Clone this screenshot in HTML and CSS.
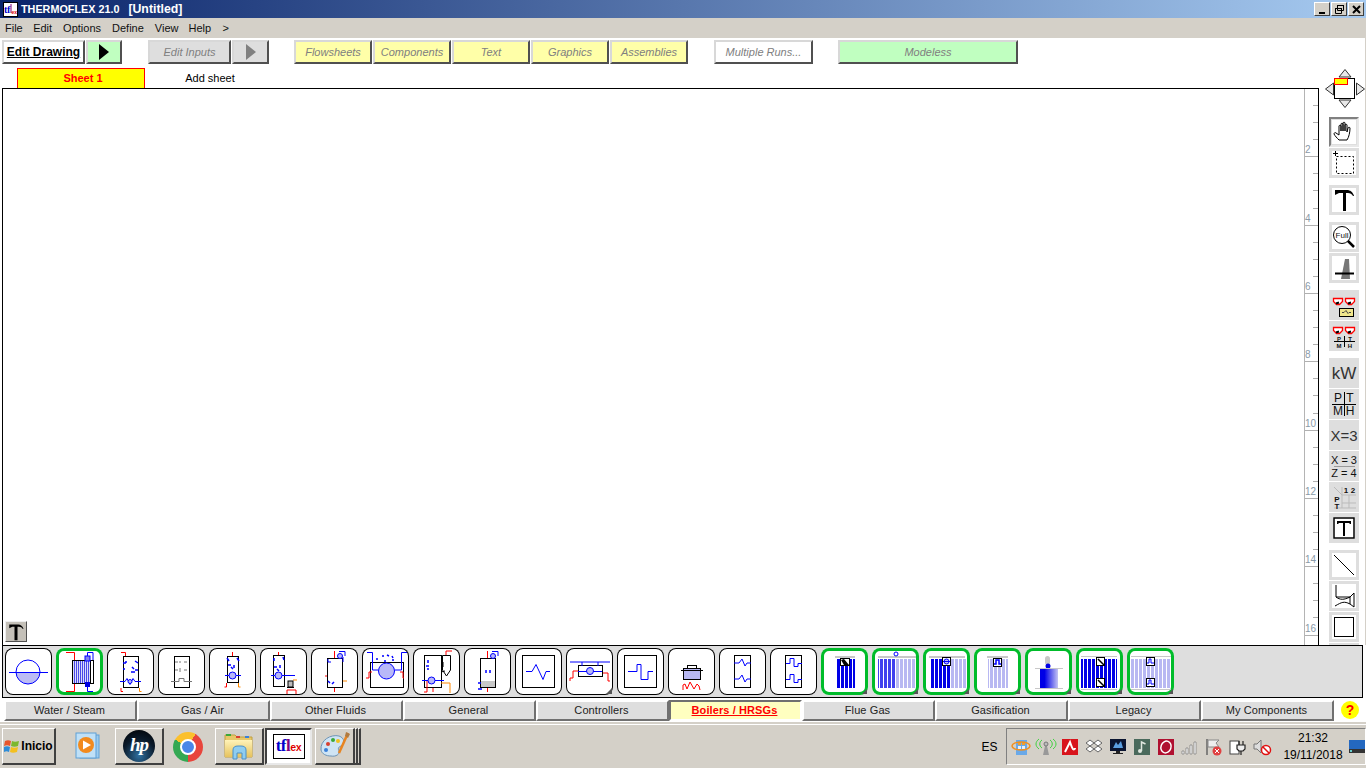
FILE: index.html
```html
<!DOCTYPE html>
<html lang="en">
<head>
<meta charset="utf-8">
<title>THERMOFLEX 21.0</title>
<link rel="stylesheet" href="styles.css">
</head>
<body>
<svg class="defs" width="0" height="0" aria-hidden="true">
  <defs>
    <pattern id="sd" width="4" height="4" patternUnits="userSpaceOnUse"><rect width="3" height="4" fill="#0000e6"/></pattern>
    <pattern id="sm" width="4" height="4" patternUnits="userSpaceOnUse"><rect width="3" height="4" fill="#4040ee"/></pattern>
    <pattern id="sl" width="4" height="4" patternUnits="userSpaceOnUse"><rect width="3" height="4" fill="#b8b8f2"/></pattern>
    <pattern id="sf" width="2" height="2" patternUnits="userSpaceOnUse"><rect width="2" height="2" fill="#dcdcfa"/><rect width="1" height="2" fill="#4a4ae8"/></pattern>
    <linearGradient id="gb" x1="0" x2="1" y1="0" y2="0"><stop offset="0.25" stop-color="#0000e6"/><stop offset="1" stop-color="#c4c4f4"/></linearGradient>
    <linearGradient id="fo" x1="0" x2="0" y1="0" y2="1"><stop offset="0" stop-color="#fff3b8"/><stop offset="1" stop-color="#e6c25e"/></linearGradient>
  </defs>
</svg>
<div class="app">
  <header class="titlebar">
    <div class="applogo"><svg width="13" height="13" viewBox="0 0 13 13"><text x="0" y="10" class="lgb">t</text><text x="3" y="10" class="lgb">f</text><path d="M7 1v9" stroke="#800080"/><text x="7.500" y="11" class="lgr">ex</text></svg></div>
    <div class="title"><span>THERMOFLEX 21.0</span><span class="doc">[Untitled]</span></div>
    <div class="winbtns">
      <div class="winbtn"><svg width="15" height="13"><rect x="4" y="9" width="6" height="2" fill="#000"/></svg></div>
      <div class="winbtn"><svg width="15" height="13"><path d="M5.500 2.500h6v5h-6zM3.500 5.500h6v5h-6z" fill="#d4d0c8" stroke="#000"/><path d="M5 2.500h7M3 5.500h7" stroke="#000" stroke-width="1"/></svg></div>
      <div class="winbtn"><svg width="15" height="13"><path d="M4 3l7 7M11 3l-7 7" stroke="#000" stroke-width="2"/></svg></div>
    </div>
  </header>
  <nav class="menubar">
    <span class="menu m1">File</span><span class="menu m2">Edit</span><span class="menu m3">Options</span><span class="menu m4">Define</span><span class="menu m5">View</span><span class="menu m6">Help</span><span class="menu m7">&gt;</span>
  </nav>
  <div class="mid">
    <div class="leftcol">
      <div class="toolbar">
        <div class="tb edit">Edit Drawing</div>
        <div class="tb play"><svg width="12" height="18"><path d="M1 1l10 8-10 8z" fill="#000"/></svg></div>
        <div class="tb inputs dis">Edit Inputs</div>
        <div class="tb play2"><svg width="12" height="18"><path d="M1 1l10 8-10 8z" fill="#808080"/></svg></div>
        <div class="tb yel dis">Flowsheets</div>
        <div class="tb yel dis">Components</div>
        <div class="tb yel dis">Text</div>
        <div class="tb yel dis">Graphics</div>
        <div class="tb yel lastyel dis">Assemblies</div>
        <div class="tb multi dis">Multiple Runs...</div>
        <div class="tb modeless dis">Modeless</div>
      </div>
      <div class="sheets">
        <div class="sheet">Sheet 1</div>
        <div class="addsheet">Add sheet</div>
      </div>
      <main class="canvas">
        <div class="drawing">
          <div class="tbtn"><svg width="18" height="18" viewBox="0 0 24 24"><path d="M3 2h12c3 0 6 2 7 6h-1c-1-2-3-3-5-3h-2v18h-4V5H7L3 7z" fill="#000"/></svg></div>
        </div>
        <div class="ruler">
          <div class="rl">2</div><div class="rl">4</div><div class="rl">6</div><div class="rl">8</div><div class="rl">10</div><div class="rl">12</div><div class="rl">14</div><div class="rl">16</div>
        </div>
      </main>
    </div>
    <aside class="panel">
      <svg class="navw" width="40" height="40" viewBox="0 0 40 40">
        <path d="M20 1.500l6 7.500H14zM20 39.500l-6-7.500h12zM.5 21l8-6v12zM39.500 21l-8-6v12z" fill="#e8e8e8" stroke="#333"/>
        <rect x="9.500" y="10.500" width="20" height="20" fill="#fff" stroke="#000"/>
        <rect x="9.500" y="10.500" width="13" height="6" fill="#ffff00" stroke="#ff0000"/>
      </svg>
      <div class="pb inner pressed"><svg width="24" height="24" viewBox="0 0 24 24"><path d="M7 20c-2-2-4-4-5-6 0-1 1-2 2-1l3 2V6c0-1 2-1 2 0v5-7c0-1 2-1 2 0v7-8c0-1 2-1 2 0v8-6c0-1 2-1 2 0v7l1-4c0-1 2-1 2 0 0 4-1 9-3 12z" fill="#fff" stroke="#000"/></svg></div>
      <div class="pb inner"><svg width="24" height="24" viewBox="0 0 24 24"><rect x="4.500" y="5.500" width="17" height="17" fill="none" stroke="#000" stroke-dasharray="2 2"/><path d="M1 2.500h5M3.500 0v5" stroke="#000"/></svg></div>
      <div class="pb inner gap"><svg width="24" height="24" viewBox="0 0 24 24"><path d="M3 2h12c3 0 6 2 7 6h-1c-1-2-3-3-5-3h-2v18h-3V5H7L3 7z" fill="#000"/></svg></div>
      <div class="pb inner gap"><svg width="24" height="24" viewBox="0 0 24 24"><circle cx="10" cy="10" r="8.500" fill="#fff" stroke="#000"/><text x="10" y="13" class="svt full">Full</text><path d="M16 16l6 6" stroke="#000" stroke-width="2.500"/></svg></div>
      <div class="pb inner"><svg width="24" height="24" viewBox="0 0 24 24"><path d="M13 3h4l1 20H9z" fill="#777"/><path d="M3 17.500h19" stroke="#000" stroke-width="2"/></svg></div>
      <div class="pb gap"><svg width="26" height="26" viewBox="0 0 26 26"><path d="M2.500 6.500h9v3l-3 3h-3l-3-3zM14.500 6.500h9v3l-3 3h-3l-3-3z" fill="#fff" stroke="#f00" stroke-width="1.300"/><path d="M5 11.500l3-1M17 11.500l3-1" stroke="#000" stroke-width="2"/><rect x="8.500" y="16.500" width="14" height="8" fill="#f0e68c" stroke="#000"/><path d="M11 20.500h2l2-2 2 3 1-1h2" fill="none" stroke="#444"/></svg></div>
      <div class="pb"><svg width="26" height="26" viewBox="0 0 26 26"><path d="M2.500 4.500h9v3l-3 3h-3l-3-3zM14.500 4.500h9v3l-3 3h-3l-3-3z" fill="#fff" stroke="#f00" stroke-width="1.300"/><path d="M5 9.500l3-1M17 9.500l3-1" stroke="#000" stroke-width="2"/><path d="M13.500 13v11M3 18.500h21" stroke="#000"/><text x="8" y="17.500" class="svt tiny">P</text><text x="19" y="17.500" class="svt tiny">T</text><text x="8" y="24.500" class="svt tiny">M</text><text x="19" y="24.500" class="svt tiny">H</text></svg></div>
      <div class="pb gap"><svg width="30" height="20" viewBox="0 0 30 20"><text x="15" y="16" class="svt big">kW</text></svg></div>
      <div class="pb"><svg width="26" height="26" viewBox="0 0 26 26"><path d="M13.500 1v24M1 13.500h24" stroke="#000"/><text x="7" y="11" class="svt mid14">P</text><text x="19" y="11" class="svt mid14">T</text><text x="7" y="24" class="svt mid14">M</text><text x="19" y="24" class="svt mid14">H</text></svg></div>
      <div class="pb"><svg width="30" height="20" viewBox="0 0 30 20"><text x="15" y="16" class="svt eq">X=3</text></svg></div>
      <div class="pb"><svg width="26" height="26" viewBox="0 0 26 26"><text x="13" y="11" class="svt x2">X = 3</text><path d="M3 13.500h21" stroke="#999"/><text x="13" y="24" class="svt x2">Z = 4</text></svg></div>
      <div class="pb"><svg width="28" height="28" viewBox="0 0 28 28"><path d="M4 4l8 8M12 12h14M12 20h14M4 25h22M12 4v21M19 12v13" stroke="#bbb" fill="none"/><text x="16" y="10" class="svt bold10">1</text><text x="23" y="10" class="svt bold10">2</text><text x="7" y="19" class="svt bold10">P</text><text x="7" y="26" class="svt bold10">T</text></svg></div>
      <div class="pb inner"><svg width="22" height="22" viewBox="0 0 22 22"><rect x="1" y="1" width="20" height="20" fill="#fff" stroke="#000" stroke-width="1.500"/><path d="M4 4h14v3h-1l-1-1h-4v13h-2V6H6L5 7H4z" fill="#000"/></svg></div>
      <div class="pb inner gap"><svg width="24" height="24" viewBox="0 0 24 24"><path d="M2 2l20 20" stroke="#000"/></svg></div>
      <div class="pb inner"><svg width="24" height="24" viewBox="0 0 24 24"><path d="M4 1v12c4 3 8 3 14 0l4-4v14l-4-3c-6-3-8-2-15 2" fill="none" stroke="#000"/><path d="M4 13h14v7" fill="none" stroke="#000"/></svg></div>
      <div class="pb inner"><svg width="24" height="24" viewBox="0 0 24 24"><rect x="2.500" y="2.500" width="19" height="19" fill="#fff" stroke="#000"/></svg></div>
      <div class="pb"></div>
    </aside>
  </div>
  <section class="tray">
    <div class="ico"><svg viewBox="0 0 47 47"><path class="fl" d="M11 24a12 12 0 0 0 24 0z"/><circle class="b" cx="23" cy="24" r="12"/><path class="b" d="M4 24.500h39"/></svg></div>
    <div class="ico g"><svg viewBox="0 0 47 47"><rect x="16.500" y="12.500" width="18" height="23" fill="url(#sf)" stroke="#000"/><rect x="34.500" y="12.500" width="3" height="23" fill="#fff" stroke="#000"/><rect x="29" y="8" width="5" height="5" fill="#8080f0" stroke="#00f"/><rect x="29" y="34" width="5" height="5" fill="#0000e0"/><path class="r" d="M10 4.500h8.500V12M10 43.500h8.500V36"/><path class="b" d="M31.500 8V4.500H37V12M31.500 38v5.500H37"/></svg></div>
    <div class="ico"><svg viewBox="0 0 47 47"><rect class="k" x="16.500" y="8.500" width="15" height="31"/><path class="r" d="M14 4.500h4.500V8M14 40v3.500h2"/><path class="o" d="M32.500 40v3.500h2"/><path class="b d" d="M16 15h3M19 13v2M28 13l3 2M16 21h2M28 22h3M25 19l2 2M24 24h4"/><path class="b" d="M13 33.500h5l2-3 3 6 3-6 2 3h6"/><circle class="c" cx="23" cy="33.500" r="2"/></svg></div>
    <div class="ico"><svg viewBox="0 0 47 47"><rect class="k" x="16.500" y="8.500" width="15" height="31"/><path class="gy" d="M17 14h3M22 13v2M26 14h3M17 22h3M22 20v4M26 22h3M13 33.500h8v-3h5v3h8"/></svg></div>
    <div class="ico"><svg viewBox="0 0 47 47"><rect class="k" x="18.500" y="8.500" width="11" height="26"/><path class="r" d="M23.500 4v4M17.500 35v4h-2"/><path class="o" d="M29.500 35v4h2"/><path class="b d" d="M18 10l2 3M28 10l2 3M19 17h3M25 17v3M22 19l2 2"/><path class="b" d="M16 27.500h16"/><circle class="c" cx="23.500" cy="27.500" r="3.500"/></svg></div>
    <div class="ico"><svg viewBox="0 0 47 47"><rect class="k" x="13.500" y="7.500" width="11" height="31"/><path class="r" d="M18.500 4v3M27 46v-4h9v4"/><path class="o" d="M33 32h4"/><path class="b d" d="M14 10v3M23 9l1 3M14 19h3M20 17v3M17 21l2 2"/><path class="b" d="M11 27.500h24"/><circle class="c" cx="18.500" cy="27.500" r="3.500"/><rect x="28" y="33" width="5" height="6" fill="#bbb" stroke="#000"/><path d="M27 39.500h7" stroke="#000"/></svg></div>
    <div class="ico"><svg viewBox="0 0 47 47"><rect class="k" x="16.500" y="10.500" width="15" height="29"/><circle class="c" cx="29" cy="8" r="2.500"/><path class="r" d="M23.500 3v7M23.500 40v4M14 28h2"/><path class="b" d="M28 3.500h6V8M32 9v5M17 11v3h3"/><path class="o" d="M32 33h4"/><path class="b d" d="M17 33l2 2M23 34l-2 2"/></svg></div>
    <div class="ico"><svg viewBox="0 0 47 47"><rect class="k" x="8.500" y="14.500" width="33" height="25"/><circle class="c" cx="24.500" cy="23" r="8"/><path class="b" d="M5 4.500h5.500V22H16M45 4.500h-5.500V22H33"/><path class="b d" d="M20 8h2M25 7l2 1M30 8l1 2M14 11h2M22 13h2M30 12h2"/><path class="r" d="M4 30h3v-6h3M42 30h-1v-6h-3"/></svg></div>
    <div class="ico"><svg viewBox="0 0 47 47"><rect class="k" x="11.500" y="7.500" width="17" height="32"/><path class="k" d="M29.500 7.500h8V22l-4 6-4-6z"/><path class="r" d="M33 7V3h6M14 33v11h-3M20 40v4"/><path class="o" d="M28 35h9v10"/><path class="b" d="M9 32.500h22"/><circle class="c" cx="18.500" cy="32.500" r="3.500"/><path class="b d" d="M15 12v3M16 18h-3M14 21h2"/><path class="gk" d="M28 14h2v5M28 24l4-1"/></svg></div>
    <div class="ico"><svg viewBox="0 0 47 47"><rect class="k" x="16.500" y="10.500" width="15" height="29"/><rect x="17" y="33" width="14" height="6" fill="#c8c8c8"/><circle class="c" cx="29" cy="8" r="2.500"/><path class="r" d="M23.500 3v7M23.500 40v4"/><path class="b" d="M28 3.500h6V8"/><path class="b d" d="M22 22v3M26 22v3M14 35h3M14 41h4"/></svg></div>
    <div class="ico"><svg viewBox="0 0 47 47"><rect class="k" x="7.500" y="7.500" width="32" height="32"/><path class="b" d="M11 23.500h6l4-7 7 15 3-8h4"/></svg></div>
    <div class="ico"><svg viewBox="0 0 47 47"><rect class="k" x="12.500" y="17.500" width="24" height="11"/><path class="b" d="M4 14h40M16 14v4M32 14v4M12 23.500h24"/><circle class="c" cx="24" cy="23" r="3.500"/><path class="r" d="M4 33v-3h3v-7h5M44 33h-2v-8h-5"/><path class="cn" d="M40 46l6-6v6z"/></svg></div>
    <div class="ico"><svg viewBox="0 0 47 47"><rect class="k" x="7.500" y="7.500" width="32" height="32"/><path class="b" d="M11 23.500h9v-7h4v15h7v-8h5"/></svg></div>
    <div class="ico"><svg viewBox="0 0 47 47"><rect x="15.500" y="20.500" width="17" height="11" fill="#b8b8f2" stroke="#000"/><rect x="19.500" y="17.500" width="9" height="3" fill="#fff" stroke="#000"/><path d="M13 22.500h22" stroke="#000"/><path class="r" d="M15 42v-5l2-1 2 5 3-7 4 7 3-5 2 2 1 4"/></svg></div>
    <div class="ico"><svg viewBox="0 0 47 47"><rect class="k" x="15.500" y="7.500" width="16" height="32"/><path class="b" d="M15 15h5l3-4 3 7 2-3h4M15 31h5l3-4 3 7 2-3h4"/></svg></div>
    <div class="ico"><svg viewBox="0 0 47 47"><rect class="k" x="15.500" y="7.500" width="16" height="32"/><path class="b" d="M16 15.500h4v-5h4v8h4v-3h4M16 31.500h4v-5h4v8h4v-3h4"/></svg></div>
    <div class="ico g"><svg viewBox="0 0 47 47"><rect x="14" y="8" width="20" height="2" fill="#c8c8c8"/><rect x="15" y="11" width="19" height="29" fill="url(#sd)"/><rect x="19.500" y="10.500" width="9" height="7" fill="#fff" stroke="#000"/><path d="M20 12l3-1 5 6h-5z" fill="#000"/><path class="cn" d="M41 46l5-5v5z"/></svg></div>
    <div class="ico g"><svg viewBox="0 0 47 47"><rect x="6" y="8" width="38" height="2" fill="#c8c8c8"/><rect x="6" y="11" width="18" height="29" fill="url(#sm)"/><rect x="24" y="11" width="20" height="29" fill="url(#sl)"/><circle cx="24" cy="6" r="2" fill="#fff" stroke="#00f"/><path class="cn" d="M41 46l5-5v5z"/></svg></div>
    <div class="ico g"><svg viewBox="0 0 47 47"><rect x="6" y="8" width="36" height="2" fill="#c8c8c8"/><rect x="7" y="11" width="20" height="29" fill="url(#sd)"/><rect x="27" y="11" width="16" height="29" fill="url(#sl)"/><rect x="19.500" y="9.500" width="8" height="8" fill="#fff" stroke="#000"/><circle class="c" cx="23.500" cy="13.500" r="2.500"/><path class="b" d="M20 13.500h7"/><path class="cn" d="M41 46l5-5v5z"/></svg></div>
    <div class="ico g"><svg viewBox="0 0 47 47"><rect x="13" y="8" width="21" height="2" fill="#c8c8c8"/><rect x="14" y="11" width="20" height="29" fill="url(#sl)"/><rect x="19.500" y="10.500" width="8" height="8" fill="#fff" stroke="#000"/><path d="M20 16h2v-4h3v4h2" fill="none" stroke="#00f" stroke-width="1.500"/><path class="cn" d="M41 46l5-5v5z"/></svg></div>
    <div class="ico g"><svg viewBox="0 0 47 47"><rect x="20" y="8" width="5" height="9" rx="2.500" fill="#c8c8c8"/><circle cx="23" cy="18" r="2.500" fill="#0000e6"/><path d="M10 20.500h28M10 40.500h28" stroke="#c8c8c8"/><rect x="15" y="21" width="18" height="19" fill="url(#gb)"/><path class="cn" d="M41 46l5-5v5z"/></svg></div>
    <div class="ico g"><svg viewBox="0 0 47 47"><rect x="5" y="11" width="36" height="29" fill="url(#sd)"/><path d="M5 8.500h36M5 41.500h36" stroke="#c8c8c8"/><rect x="20.500" y="9.500" width="8" height="8" fill="#fff" stroke="#000"/><path d="M22 11l6 6" stroke="#000" stroke-width="1.500"/><rect x="20.500" y="30.500" width="8" height="8" fill="#fff" stroke="#000"/><path d="M22 32l6 6" stroke="#000" stroke-width="1.500"/><path class="cn" d="M41 46l5-5v5z"/></svg></div>
    <div class="ico g"><svg viewBox="0 0 47 47"><rect x="4" y="11" width="40" height="29" fill="url(#sl)"/><path d="M4 8.500h40M4 41.500h40" stroke="#c8c8c8"/><rect x="19.500" y="9.500" width="8" height="8" fill="#fff" stroke="#000"/><path d="M20 15h2v-4h2v4h3" fill="none" stroke="#00f"/><rect x="19.500" y="30.500" width="8" height="8" fill="#fff" stroke="#000"/><path d="M20 36h2v-4h2v4h3" fill="none" stroke="#00f"/><path class="cn" d="M41 46l5-5v5z"/></svg></div>
  </section>
  <div class="tabs">
    <div class="tab">Water / Steam</div>
    <div class="tab">Gas / Air</div>
    <div class="tab">Other Fluids</div>
    <div class="tab">General</div>
    <div class="tab">Controllers</div>
    <div class="tab active">Boilers / HRSGs</div>
    <div class="tab">Flue Gas</div>
    <div class="tab">Gasification</div>
    <div class="tab">Legacy</div>
    <div class="tab">My Components</div>
    <div class="help">?</div>
  </div>
  <footer class="taskbar">
    <div class="tk start">
      <svg width="16" height="16" viewBox="0 0 16 16"><path d="M1 3c2-1 4-1 6 0l-1 5c-2-1-4-1-6 0z" fill="#e8552c"/><path d="M8 3c2 1 4 1 7 0l-1 5c-2 1-5 1-7 0z" fill="#7cb82f"/><path d="M0 9c2-1 4-1 6 0l-1 5c-2-1-3-1-5 0z" fill="#2e8cd8"/><path d="M7 9c2 1 5 1 7 0l-1 5c-3 1-5 1-7 0z" fill="#f4c01e"/></svg>
      <span>Inicio</span>
    </div>
    <div class="tk flat media"><svg width="30" height="30" viewBox="0 0 30 30"><rect x="5" y="3" width="19" height="23" fill="#9ccbee" stroke="#5fa0d6"/><rect x="1" y="1" width="20" height="25" fill="#bfe0f7" stroke="#5fa0d6"/><circle cx="11" cy="13" r="8" fill="#f28a1e"/><path d="M8 8.500l8 4.500-8 4.500z" fill="#fff"/></svg></div>
    <div class="tk hp"><div class="hpc">hp</div></div>
    <div class="tk flat chrome"><div class="chr"><div class="chi"></div></div></div>
    <div class="tk folder"><svg width="32" height="32" viewBox="0 0 32 32"><path d="M2 5h10l2 2h15v20H2z" fill="#e7c768" stroke="#c0a040"/><rect x="3" y="4" width="5" height="2" fill="#3aa83a"/><rect x="13" y="6" width="4" height="2" fill="#d84030"/><rect x="22" y="6" width="4" height="2" fill="#3a80d8"/><path d="M2 10h27v17H2z" fill="url(#fo)"/><path d="M10 29V20c0-3 2-4 5-4h3c3 0 5 1 5 4v9h-4v-6h-5v6z" fill="#8fcdf0" stroke="#4a90c8"/></svg></div>
    <div class="tk pressedt"><div class="flex"><span class="lb">tf</span><span class="lp">l</span><span class="lr">ex</span></div></div>
    <div class="tk paint"><svg width="32" height="32" viewBox="0 0 32 32"><path d="M2 20C1 10 12 4 20 6c6 2 6 8 2 10-3 1-3 3-2 5 1 3-3 6-8 5-5 0-9-2-10-6z" fill="#cfe4f4" stroke="#6e93b4"/><circle cx="9" cy="14" r="2" fill="#d84030"/><circle cx="14" cy="10" r="2" fill="#3aa83a"/><circle cx="7" cy="20" r="2" fill="#3a80d8"/><circle cx="19" cy="11" r="2" fill="#f0c020"/><path d="M29 3l-9 20" stroke="#e88420" stroke-width="2.500"/><path d="M27 2l4 2-2 4-3-2z" fill="#b07a40"/></svg></div>
    <div class="tk stub"></div><div class="tk stub"></div>
    <div class="lang">ES</div>
    <div class="systray">
      <svg class="ti" width="24" height="18" viewBox="0 0 24 18"><rect x="6" y="2" width="11" height="15" fill="#6aa9e8"/><path d="M8 4h3v3H8zM12 4h3v3h-3z" fill="#f0a030"/><path d="M8 8h3v3H8zM12 8h3v3h-3z" fill="#e8f0f8"/><ellipse cx="11" cy="8" rx="9" ry="4" fill="none" stroke="#f09020" stroke-width="1.500"/></svg>
      <svg class="ti" width="24" height="18" viewBox="0 0 24 18"><path d="M9 17h6l-2-9h-2z" fill="#999"/><circle cx="12" cy="6" r="2" fill="#bbb" stroke="#777"/><path d="M8 2c-3 2-3 6 0 8M16 2c3 2 3 6 0 8M5 1c-4 3-4 7 0 10M19 1c4 3 4 7 0 10" fill="none" stroke="#3fd03f"/></svg>
      <svg class="ti" width="24" height="18" viewBox="0 0 24 18"><rect x="4" y="1" width="16" height="16" fill="#d8141c"/><path d="M7 14l5-10c1 3 2 6 3 7 1 1 2 0 2-1" fill="none" stroke="#fff" stroke-width="2"/></svg>
      <svg class="ti" width="24" height="18" viewBox="0 0 24 18"><path d="M8 2l4 3-4 3-4-3zM16 2l4 3-4 3-4-3zM8 8l4 3-4 3-4-3zM16 8l4 3-4 3-4-3z" fill="#fff" stroke="#666"/></svg>
      <svg class="ti" width="24" height="18" viewBox="0 0 24 18"><rect x="4" y="1" width="16" height="12" fill="#0a1430"/><path d="M7 10l3-6 2 3 3-4 2 7z" fill="#5a9ee0"/><rect x="10" y="13" width="4" height="2" fill="#222"/><rect x="7" y="15" width="10" height="1" fill="#222"/></svg>
      <svg class="ti" width="24" height="18" viewBox="0 0 24 18"><rect x="4" y="1" width="16" height="16" fill="#4a6a5c"/><circle cx="10" cy="13" r="2" fill="#e0e8e0"/><path d="M11.500 13V4l4 2" fill="none" stroke="#e0e8e0" stroke-width="1.500"/></svg>
      <svg class="ti" width="24" height="18" viewBox="0 0 24 18"><rect x="4" y="1" width="16" height="16" fill="#b01030"/><ellipse cx="12" cy="9" rx="5" ry="6" fill="none" stroke="#fff" stroke-width="1.500" transform="rotate(20 12 9)"/></svg>
      <svg class="ti" width="24" height="18" viewBox="0 0 24 18"><path d="M4 13h2v3H4zM8 10h2v6H8zM12 7h2v9h-2zM16 4h2v12h-2z" fill="#fff" stroke="#777" stroke-width="0.700"/></svg>
      <svg class="ti" width="24" height="18" viewBox="0 0 24 18"><path d="M5 1v16" stroke="#666" stroke-width="1.500"/><path d="M6 2h11l-3 3 3 4H6z" fill="#eee" stroke="#888"/><circle cx="15" cy="13" r="4.500" fill="#e04040"/><path d="M13 11l4 4M17 11l-4 4" stroke="#fff"/></svg>
      <svg class="ti" width="24" height="18" viewBox="0 0 24 18"><rect x="4" y="3" width="9" height="13" fill="#fff" stroke="#444"/><path d="M11 7h8v4l-2 2h-4l-2-2zM13 3v4M17 3v4M15 13v4" fill="#eee" stroke="#222" stroke-width="1.200"/></svg>
      <svg class="ti" width="24" height="18" viewBox="0 0 24 18"><path d="M4 6h3l4-4v13l-4-4H4z" fill="#ddd" stroke="#777"/><circle cx="16" cy="12" r="4.500" fill="#fff" stroke="#e01010" stroke-width="1.500"/><path d="M13 9l6 6" stroke="#e01010" stroke-width="1.500"/></svg>
      <div class="clock"><div>21:32</div><div>19/11/2018</div></div>
      <svg width="16" height="14" viewBox="0 0 16 14"><rect width="16" height="13" fill="#2468c0"/><rect y="9" width="16" height="4" fill="#333"/><rect x="1" y="10" width="2" height="2" fill="#6cc"/></svg>
    </div>
  </footer>
</div>
</body>
</html>
```
FILE: styles.css
```css
* { box-sizing: border-box; }
html, body { margin: 0; padding: 0; overflow: hidden; }
body { font-family: "Liberation Sans", Arial, sans-serif; background: #fff; color: #000; }
svg { display: block; }
.defs { height: 0; width: 0; }
.app { width: 1366px; height: 768px; display: flex; flex-direction: column; overflow: hidden; }

.titlebar { height: 18px; display: flex; align-items: center; padding: 0 2px 0 3px; background: linear-gradient(90deg, #0a246a 0%, #a6caf0 100%); }
.applogo { width: 15px; height: 15px; background: #fff; border: 1px solid #000; overflow: hidden; }
.lgb { font: bold 10px "Liberation Serif", serif; fill: #0000cc; }
.lgr { font: bold 5px "Liberation Sans", sans-serif; fill: #e00000; }
.lb { color: #0000cc; }
.lr { color: #e00000; }
.lp { color: #800080; }
.title { margin-left: 3px; color: #fff; font-weight: bold; font-size: 10.800px; flex: 1; white-space: nowrap; }
.doc { margin-left: 9px; font-size: 12.300px; }
.winbtns { display: flex; gap: 1px; }
.winbtn { width: 16px; height: 14px; background: #d4d0c8; border: 1px solid; border-color: #fff #404040 #404040 #fff; }

.menubar { height: 20px; background: #d4d0c8; display: flex; align-items: center; font-size: 11px; color: #111; padding-left: 5px; }
.menu { display: block; }
.m2 { margin-left: 10.400px; }
.m3 { margin-left: 11px; }
.m4 { margin-left: 11px; }
.m5 { margin-left: 11px; }
.m6 { margin-left: 10px; }
.m7 { margin-left: 11.500px; }

.mid { height: 607px; display: flex; }
.leftcol { width: 1319px; flex: none; display: flex; flex-direction: column; }

.toolbar { height: 30px; display: flex; padding: 2px 0 0 2px; align-items: flex-start; }
.tb { height: 24px; display: flex; align-items: center; justify-content: center; border: 2px solid; border-color: #d8d8d8 #505050 #505050 #d8d8d8; font-size: 11px; flex: none; margin-right: 1px; }
.edit { width: 83px; background: #fff; font-weight: bold; font-size: 12px; text-decoration: underline; }
.play { width: 36px; background: #c0ffc0; margin-right: 26px; }
.inputs { width: 83px; background: #dedede; }
.play2 { width: 37px; background: #dedede; margin-right: 25px; }
.dis { color: #808080; font-style: italic; }
.yel { width: 78px; background: #ffffa8; }
.lastyel { margin-right: 26px; }
.multi { width: 99px; background: #fff; margin-right: 25px; }
.modeless { width: 180px; background: #c0ffc0; }

.sheets { height: 20px; display: flex; padding-left: 17px; }
.sheet { width: 128px; height: 20px; background: #ffff00; border: 1px solid #ff0000; border-bottom: 0; color: #ff0000; font-weight: bold; font-size: 11px; display: flex; align-items: center; justify-content: center; padding: 0 0 2px 4px; }
.addsheet { width: 130px; display: flex; align-items: center; justify-content: center; font-size: 11px; }

.canvas { height: 557px; margin-left: 2px; border: 1px solid #000; border-bottom: 0; display: flex; background: #fff; }
.drawing { flex: 1; display: flex; align-items: flex-end; padding: 0 0 3px 2px; }
.tbtn { width: 22px; height: 21px; background: #c4c0b8; border: 1px solid; border-color: #eee #505050 #505050 #eee; display: flex; align-items: center; justify-content: center; }
.ruler { width: 14px; flex: none; border-left: 1px solid #b4b4b4; display: flex; flex-direction: column; background-image: repeating-linear-gradient(180deg, transparent 0, transparent 67.330px, #b0b0b0 67.330px, #b0b0b0 68.330px), repeating-linear-gradient(180deg, transparent 0, transparent 16.080px, #b0b0b0 16.080px, #b0b0b0 17.080px); background-size: 100% 100%, 5px 100%; background-position: 0 0, right 0 top 0; background-repeat: no-repeat; }
.rl { height: 68.330px; flex: none; display: flex; align-items: flex-end; padding: 0 0 1px 0; font-size: 10px; line-height: 12px; color: #8a9aa8; }

.panel { width: 47px; flex: none; padding-top: 30px; border-right: 1px solid #d4d0c8; overflow: hidden; }
.navw { margin-left: 6px; margin-bottom: 9px; }
.pb { width: 30px; height: 30px; margin: 1px 0 0 10px; background: #dedede; display: flex; align-items: center; justify-content: center; }
.navw + .pb { margin-top: 0; }
.pb.gap { margin-top: 7px; }
.inner svg { background: #fff; }
.pressed { border: 2px solid; border-color: #808080 #e8e8e8 #e8e8e8 #808080; }
.svt { text-anchor: middle; font-family: "Liberation Sans", sans-serif; fill: #111; }
.big { font-size: 17px; fill: #333; }
.eq { font-size: 15px; fill: #333; }
.full { font-size: 8px; }
.tiny { font-size: 6px; font-weight: bold; }
.mid14 { font-size: 12px; }
.x2 { font-size: 11px; }
.bold10 { font-size: 8px; font-weight: bold; }

.tray { height: 53px; margin-left: 2px; width: 1361px; border: 1px solid #000; background: #dedede; display: flex; gap: 4px; padding: 2px 0 0 2px; }
.ico { width: 47px; height: 47px; flex: none; background: #fff; border-radius: 8px; box-shadow: inset 0 0 0 1px #000; }
.ico.g { box-shadow: inset 0 0 0 3px #00bc2a; }
.ico svg { width: 47px; height: 47px; }
.b, .r, .o, .k, .gy, .gk { fill: none; }
.b { stroke: #0000ff; }
.d { stroke-width: 1.500; }
.r { stroke: #ff0000; }
.o { stroke: #ff8800; }
.k { stroke: #000; fill: #fff; }
.gy { stroke: #777; }
.gk { stroke: #000; }
.fl { fill: #bcbcf4; }
.c { fill: #b8b8f8; stroke: #0000ff; }
.cn { fill: #555; }

.tabs { height: 24px; display: flex; padding: 2px 0 0 4px; align-items: flex-start; }
.tab { width: 133px; height: 21px; flex: none; background: #dedede; border: 2px solid; border-color: #fff #707070 #707070 #fff; font-size: 11px; display: flex; align-items: center; justify-content: center; color: #222; letter-spacing: 0.100px; padding: 0 2px 2px 0; }
.tab.active { background: #ffffc0; color: #ff0000; font-weight: bold; text-decoration: underline; border-color: #707070 #fff #fff #707070; }
.help { width: 18px; height: 18px; margin: 1px 0 0 7px; border-radius: 50%; background: #ffff00; color: #ff0000; font-weight: bold; font-size: 14px; line-height: 18px; text-align: center; }

.taskbar { height: 46px; background: #d4d0c8; display: flex; align-items: flex-start; padding: 0 0 0 2px; border-top: 2px solid #d4d0c8; box-shadow: inset 0 1px 0 #fff; }
.tk { height: 37px; flex: none; margin-top: 4px; border: 1px solid; border-color: #fff #404040 #404040 #fff; display: flex; align-items: center; justify-content: center; }
.tk.flat { border-color: transparent; }
.start { width: 54px; gap: 1px; font-size: 12px; font-weight: bold; border-width: 1px 2px 2px 1px; margin-right: 16px; }
.media { width: 36px; margin-right: 7px; }
.hp { width: 49px; border-width: 1px 2px 2px 1px; }
.hpc { width: 32px; height: 32px; border-radius: 50%; background: radial-gradient(circle at 50% 80%, #2f6f9f 0%, #0a1a2a 55%, #000 100%); color: #fff; font: italic bold 19px/30px "Liberation Serif", serif; text-align: center; letter-spacing: -1px; }
.chrome { width: 51px; padding-right: 3px; }
.chr { width: 30px; height: 30px; border-radius: 50%; background: conic-gradient(from 30deg, #e8453c 0 150deg, #34a853 0 270deg, #fbc02d 0 360deg); display: flex; align-items: center; justify-content: center; }
.chi { width: 16px; height: 16px; border-radius: 50%; background: #4a86e8; border: 2px solid #fff; }
.folder { width: 49px; margin-right: 1px; border-width: 1px 2px 2px 1px; }
.pressedt { width: 47px; background: #fff; border: 2px solid; border-color: #404040 #e8e8e8 #e8e8e8 #404040; margin-right: 3px; }
.flex { width: 32px; height: 25px; border: 1px solid #000; background: #fff; font: bold 17px/22px "Liberation Serif", serif; text-align: center; white-space: nowrap; letter-spacing: -0.500px; }
.flex .lr { font: bold 10px "Liberation Mono", monospace; letter-spacing: -0.500px; }
.paint { width: 40px; border-width: 1px 2px 2px 1px; }
.stub { width: 3px; border-width: 1px 2px 2px 0; }
.lang { width: 27px; margin: 4px 0 0 auto; font-size: 12px; height: 37px; display: flex; align-items: center; justify-content: center; }
.systray { width: 360px; height: 37px; margin: 4px 0 0 3px; flex: none; border: 1px solid; border-color: #808080 #fff #fff #808080; display: flex; align-items: center; padding-left: 3px; }
.ti { flex: none; }
.clock { width: 72px; margin-left: 3px; text-align: center; font-size: 12px; line-height: 17px; }
```
